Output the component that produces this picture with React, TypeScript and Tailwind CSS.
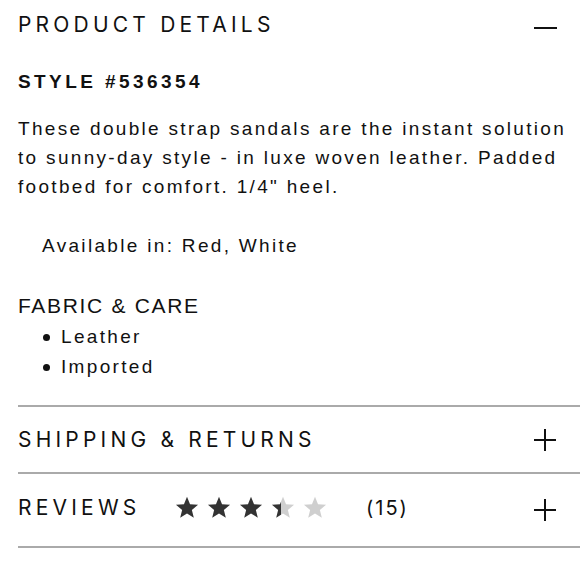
import React from "react"

const HEAD = "font-['Inter',sans-serif] text-[21px] font-normal tracking-[0.2em] text-[#111]"
const BODY = "font-['Liberation_Sans',Arial,sans-serif] text-[19px] tracking-[0.122em] text-[#111]"

function Star({ fill, id }: { fill: number; id: string }) {
  return (
    <svg width="26" height="26" viewBox="0 0 24 24" aria-hidden>
      <defs>
        <linearGradient id={id}>
          <stop offset={fill} stopColor="#333" />
          <stop offset={fill} stopColor="#cfcfcf" />
        </linearGradient>
      </defs>
      <path
        d="M12 2.5l2.8 6.9 7.4.5-5.7 4.8 1.8 7.2L12 18l-6.3 3.9 1.8-7.2L1.8 9.9l7.4-.5z"
        fill={`url(#${id})`}
      />
    </svg>
  )
}

function Plus() {
  return (
    <svg width="24" height="24" viewBox="0 0 24 24" aria-hidden>
      <path d="M12 1v22M1 12h22" stroke="#111" strokeWidth="2" />
    </svg>
  )
}

export default function App() {
  const stars = [1, 1, 1, 0.4, 0]
  return (
    <div className="w-[580px] h-[580px] bg-white pl-[18px] overflow-hidden">
      <div className="flex items-center justify-between pr-[23px] h-[50px]">
        <span className={HEAD}>PRODUCT DETAILS</span>
        <span className="block w-[23px] h-[2px] bg-[#111] mt-[6px]" />
      </div>

      <div>
        <div className="mt-[18px] font-['Liberation_Sans',Arial,sans-serif] text-[19px] font-bold tracking-[0.18em] text-[#111] leading-[28px]">
          STYLE #536354
        </div>
        <p className={`${BODY} mt-[18px] leading-[29px] whitespace-nowrap`}>
          These double strap sandals are the instant solution
          <br />
          to sunny-day style - in luxe woven leather. Padded
          <br />
          footbed for comfort. 1/4" heel.
        </p>
        <p className={`${BODY} mt-[30px] pl-[24px] leading-[29px]`}>Available in: Red, White</p>

        <div className="mt-[31px] font-['Liberation_Sans',Arial,sans-serif] text-[21px] tracking-[0.08em] text-[#111] leading-[30px]">
          FABRIC &amp; CARE
        </div>
        <ul className={`${BODY} pl-[25px] leading-[30px]`}>
          <li className="flex items-center gap-[11px] pt-[1px]">
            <span className="w-[7px] h-[7px] rounded-full bg-[#111]" />
            Leather
          </li>
          <li className="flex items-center gap-[11px]">
            <span className="w-[7px] h-[7px] rounded-full bg-[#111]" />
            Imported
          </li>
        </ul>
      </div>

      <div className="mt-[23px] border-t-2 border-[#aaa]">
        <div className="flex items-center justify-between pr-[23px] h-[65px]">
          <span className={HEAD}>SHIPPING &amp; RETURNS</span>
          <Plus />
        </div>
      </div>

      <div className="border-t-2 border-[#aaa]">
        <div className="flex items-center pr-[23px] h-[72px] pb-[4px]">
          <span className={`${HEAD} w-[156px]`}>REVIEWS</span>
          <div className="flex items-center gap-[6px] pb-[2px]">
            {stars.map((f, i) => (
              <Star key={i} fill={f} id={`st${i}`} />
            ))}
          </div>
          <span className="ml-[38px] font-['Inter',sans-serif] text-[20px] tracking-[0.1em] text-[#111]">(15)</span>
          <span className="ml-auto pt-[4px]">
            <Plus />
          </span>
        </div>
      </div>
      <div className="border-t-2 border-[#aaa]" />
    </div>
  )
}
